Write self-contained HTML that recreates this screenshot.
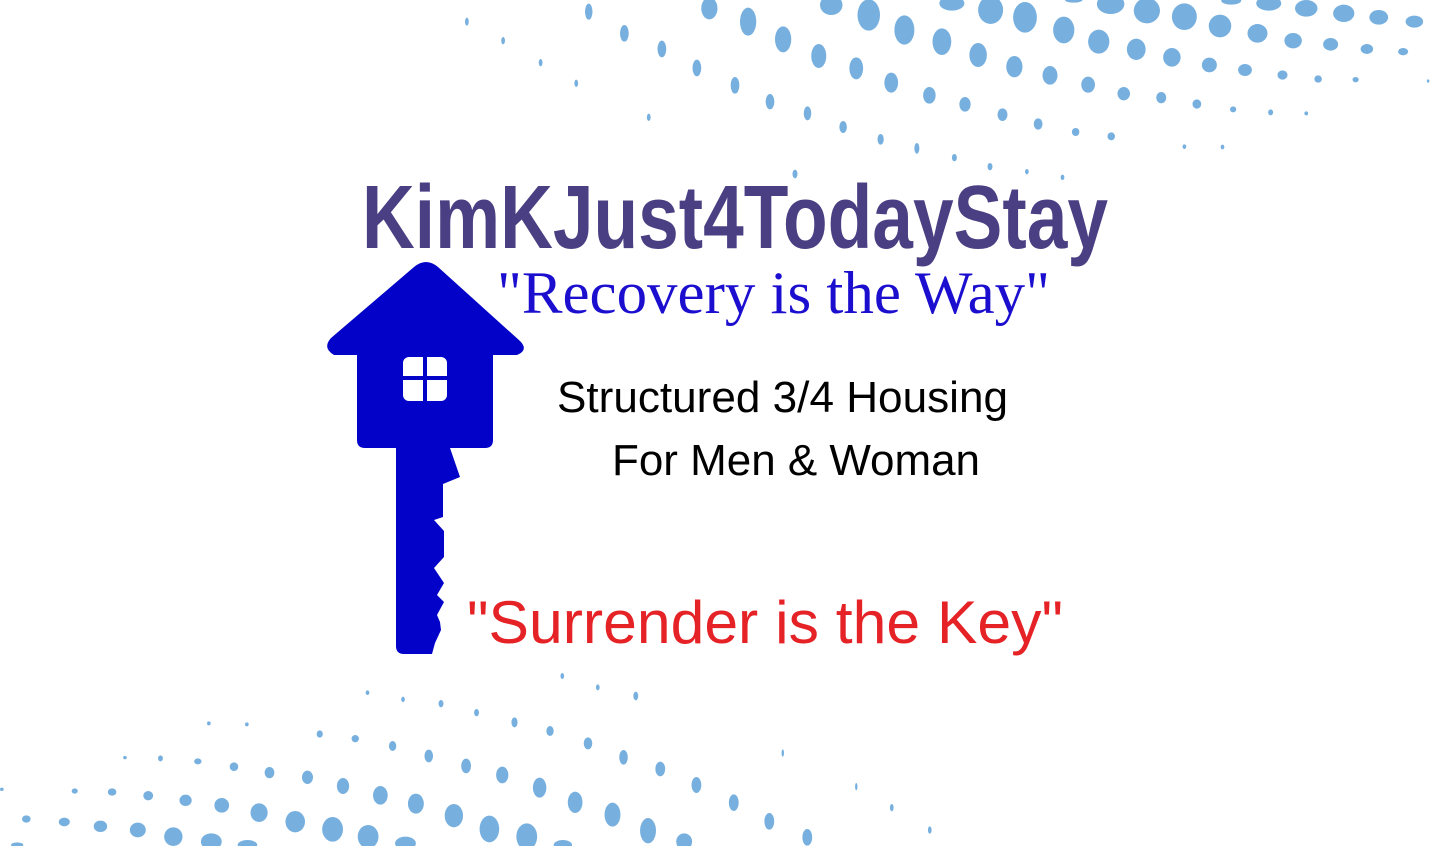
<!DOCTYPE html>
<html><head><meta charset="utf-8"><style>
html,body{margin:0;padding:0;background:#fff;}
svg{display:block;}
</style></head><body>
<svg width="1431" height="846" viewBox="0 0 1431 846" xmlns="http://www.w3.org/2000/svg">
<g fill="#77b0df" transform="translate(450,0) scale(0.625,0.3333)">
<ellipse cx="27" cy="65" rx="3" ry="12"/><ellipse cx="85" cy="122" rx="3" ry="11"/><ellipse cx="145" cy="188" rx="3" ry="11"/><ellipse cx="202" cy="250" rx="3" ry="11"/><ellipse cx="318" cy="352" rx="3" ry="11"/>
<ellipse cx="222" cy="35" rx="6" ry="24"/><ellipse cx="279" cy="100" rx="7" ry="25"/><ellipse cx="339" cy="147" rx="7" ry="25"/><ellipse cx="395" cy="204" rx="7" ry="25"/><ellipse cx="456" cy="256" rx="7" ry="25"/><ellipse cx="512" cy="305" rx="7" ry="23"/><ellipse cx="572" cy="340" rx="6" ry="21"/><ellipse cx="629" cy="381" rx="6" ry="18"/><ellipse cx="689" cy="418" rx="5" ry="16"/><ellipse cx="747" cy="445" rx="4" ry="16"/><ellipse cx="807" cy="473" rx="4" ry="11"/><ellipse cx="864" cy="500" rx="4" ry="11"/><ellipse cx="923" cy="515" rx="3" ry="8"/><ellipse cx="980" cy="532" rx="3" ry="8"/><ellipse cx="552" cy="522" rx="4" ry="13"/>
<ellipse cx="415" cy="25" rx="13" ry="33"/><ellipse cx="477" cy="65" rx="13" ry="42"/><ellipse cx="533" cy="118" rx="13" ry="39"/><ellipse cx="590" cy="168" rx="12" ry="36"/><ellipse cx="650" cy="205" rx="11" ry="33"/><ellipse cx="706" cy="248" rx="11" ry="30"/><ellipse cx="767" cy="286" rx="10" ry="25"/><ellipse cx="824" cy="313" rx="9" ry="22"/><ellipse cx="884" cy="344" rx="8" ry="19"/><ellipse cx="941" cy="372" rx="7" ry="17"/><ellipse cx="1001" cy="396" rx="6" ry="12"/><ellipse cx="1058" cy="409" rx="6" ry="12"/><ellipse cx="1175" cy="440" rx="3" ry="7"/><ellipse cx="1236" cy="441" rx="3" ry="7"/>
<ellipse cx="610" cy="15" rx="18" ry="30"/><ellipse cx="670" cy="45" rx="18" ry="47"/><ellipse cx="727" cy="90" rx="16" ry="44"/><ellipse cx="787" cy="125" rx="15" ry="40"/><ellipse cx="845" cy="165" rx="14" ry="36"/><ellipse cx="903" cy="200" rx="13" ry="32"/><ellipse cx="960" cy="226" rx="12" ry="28"/><ellipse cx="1021" cy="254" rx="11" ry="24"/><ellipse cx="1078" cy="281" rx="10" ry="20"/><ellipse cx="1138" cy="293" rx="8" ry="17"/><ellipse cx="1195" cy="312" rx="7" ry="14"/><ellipse cx="1253" cy="328" rx="5" ry="9"/><ellipse cx="1313" cy="337" rx="4" ry="9"/><ellipse cx="1370" cy="340" rx="3" ry="6"/>
<ellipse cx="803" cy="10" rx="20" ry="22"/><ellipse cx="865" cy="30" rx="20" ry="42"/><ellipse cx="920" cy="52" rx="19" ry="46"/><ellipse cx="982" cy="90" rx="17" ry="40"/><ellipse cx="1038" cy="125" rx="17" ry="36"/><ellipse cx="1098" cy="148" rx="15" ry="32"/><ellipse cx="1155" cy="172" rx="14" ry="28"/><ellipse cx="1215" cy="195" rx="12" ry="22"/><ellipse cx="1272" cy="210" rx="11" ry="18"/><ellipse cx="1332" cy="225" rx="8" ry="14"/><ellipse cx="1389" cy="237" rx="6" ry="11"/><ellipse cx="1449" cy="239" rx="5" ry="8"/>
<ellipse cx="998" cy="0" rx="14" ry="8"/><ellipse cx="1057" cy="12" rx="22" ry="30"/><ellipse cx="1115" cy="32" rx="21" ry="38"/><ellipse cx="1175" cy="50" rx="20" ry="40"/><ellipse cx="1232" cy="78" rx="18" ry="34"/><ellipse cx="1292" cy="100" rx="16" ry="28"/><ellipse cx="1349" cy="122" rx="14" ry="23"/><ellipse cx="1409" cy="133" rx="12" ry="19"/><ellipse cx="1467" cy="147" rx="10" ry="15"/><ellipse cx="1525" cy="155" rx="8" ry="11"/>
<ellipse cx="1250" cy="2" rx="16" ry="12"/><ellipse cx="1310" cy="10" rx="20" ry="22"/><ellipse cx="1370" cy="25" rx="18" ry="25"/><ellipse cx="1430" cy="40" rx="17" ry="26"/><ellipse cx="1486" cy="52" rx="15" ry="22"/><ellipse cx="1543" cy="65" rx="14" ry="18"/><ellipse cx="1565" cy="243" rx="2" ry="5"/>
</g>
<g fill="#77b0df" transform="translate(0,660) scale(0.6125,0.3333)">
<ellipse cx="918" cy="48" rx="3" ry="9"/><ellipse cx="976" cy="82" rx="3" ry="9"/><ellipse cx="1038" cy="108" rx="4" ry="13"/><ellipse cx="600" cy="98" rx="3" ry="7"/><ellipse cx="658" cy="118" rx="3" ry="8"/><ellipse cx="720" cy="131" rx="4" ry="11"/><ellipse cx="778" cy="158" rx="4" ry="11"/><ellipse cx="840" cy="187" rx="5" ry="15"/><ellipse cx="898" cy="213" rx="6" ry="15"/><ellipse cx="960" cy="250" rx="7" ry="18"/><ellipse cx="1018" cy="292" rx="7" ry="22"/><ellipse cx="1078" cy="327" rx="8" ry="22"/><ellipse cx="1137" cy="375" rx="8" ry="24"/><ellipse cx="1198" cy="428" rx="8" ry="25"/><ellipse cx="1256" cy="484" rx="8" ry="25"/><ellipse cx="1318" cy="532" rx="8" ry="25"/>
<ellipse cx="341" cy="190" rx="3" ry="6"/><ellipse cx="403" cy="193" rx="3" ry="6"/><ellipse cx="522" cy="222" rx="5" ry="11"/><ellipse cx="580" cy="236" rx="6" ry="11"/><ellipse cx="641" cy="258" rx="6" ry="15"/><ellipse cx="700" cy="288" rx="7" ry="19"/><ellipse cx="761" cy="318" rx="8" ry="22"/><ellipse cx="820" cy="345" rx="10" ry="25"/><ellipse cx="881" cy="383" rx="11" ry="30"/><ellipse cx="939" cy="427" rx="12" ry="32"/><ellipse cx="1000" cy="464" rx="13" ry="36"/><ellipse cx="1058" cy="512" rx="13" ry="38"/><ellipse cx="1117" cy="545" rx="13" ry="25"/>
<ellipse cx="204" cy="293" rx="3" ry="5"/><ellipse cx="262" cy="295" rx="4" ry="9"/><ellipse cx="323" cy="304" rx="6" ry="9"/><ellipse cx="382" cy="320" rx="7" ry="13"/><ellipse cx="440" cy="338" rx="8" ry="17"/><ellipse cx="502" cy="352" rx="9" ry="20"/><ellipse cx="560" cy="378" rx="10" ry="24"/><ellipse cx="621" cy="406" rx="12" ry="28"/><ellipse cx="679" cy="431" rx="13" ry="30"/><ellipse cx="741" cy="467" rx="15" ry="35"/><ellipse cx="799" cy="507" rx="16" ry="40"/><ellipse cx="860" cy="530" rx="17" ry="40"/><ellipse cx="919" cy="555" rx="15" ry="15"/>
<ellipse cx="3" cy="388" rx="3" ry="5"/><ellipse cx="122" cy="393" rx="5" ry="8"/><ellipse cx="183" cy="396" rx="7" ry="11"/><ellipse cx="242" cy="407" rx="8" ry="14"/><ellipse cx="303" cy="421" rx="10" ry="17"/><ellipse cx="362" cy="436" rx="12" ry="22"/><ellipse cx="423" cy="458" rx="14" ry="28"/><ellipse cx="482" cy="485" rx="16" ry="32"/><ellipse cx="543" cy="508" rx="17" ry="37"/><ellipse cx="601" cy="530" rx="17" ry="35"/><ellipse cx="662" cy="550" rx="17" ry="20"/>
<ellipse cx="43" cy="477" rx="7" ry="11"/><ellipse cx="105" cy="486" rx="9" ry="13"/><ellipse cx="164" cy="499" rx="11" ry="17"/><ellipse cx="225" cy="510" rx="13" ry="22"/><ellipse cx="283" cy="530" rx="15" ry="28"/><ellipse cx="345" cy="545" rx="17" ry="25"/><ellipse cx="404" cy="555" rx="16" ry="15"/><ellipse cx="28" cy="555" rx="10" ry="8"/>
<ellipse cx="1278" cy="279" rx="2" ry="11"/><ellipse cx="1398" cy="380" rx="2" ry="11"/><ellipse cx="1456" cy="443" rx="3" ry="11"/><ellipse cx="1518" cy="510" rx="3" ry="11"/>
</g>

<!-- key house -->
<g fill="#0202c9">
<path d="M426,262 Q420,262 414,267 L331,338 Q322,348 334,355 L357,355 L357,440 Q357,448 365,448 L396,448 L396,646 Q396,654 404,654 L432,654 L435,643 L441,630 L440,622 L437,615 L444,602 L437,595 L444,583 L434,568 L444,557 L444,531 L434,520 L443,517 L443,484 L460,477 L450,448 L485,448 Q493,448 493,440 L493,355 L517,355 Q529,350 520,341 L438,267 Q432,262 426,262 Z"/>
</g>
<rect x="403" y="357" width="44" height="44" rx="6" fill="#fff"/>
<rect x="423" y="357" width="4" height="44" fill="#0202c9"/>
<rect x="403" y="376" width="44" height="4" fill="#0202c9"/>

<text x="362" y="248" textLength="746" lengthAdjust="spacingAndGlyphs" font-family="Liberation Sans, sans-serif" font-weight="bold" font-size="90" fill="#4b3f83">KimKJust4TodayStay</text>
<text x="497" y="313" textLength="553" lengthAdjust="spacingAndGlyphs" font-family="Liberation Serif, serif" font-size="60" fill="#1b0ecf">"Recovery is the Way"</text>
<text x="557" y="412" textLength="451" lengthAdjust="spacingAndGlyphs" font-family="Liberation Sans, sans-serif" font-size="44" fill="#000">Structured 3/4 Housing</text>
<text x="612" y="475" textLength="368" lengthAdjust="spacingAndGlyphs" font-family="Liberation Sans, sans-serif" font-size="44" fill="#000">For Men &amp; Woman</text>
<text x="467" y="643" textLength="596" lengthAdjust="spacingAndGlyphs" font-family="Liberation Sans, sans-serif" font-size="60" fill="#e52226">"Surrender is the Key"</text>
</svg>
</body></html>
